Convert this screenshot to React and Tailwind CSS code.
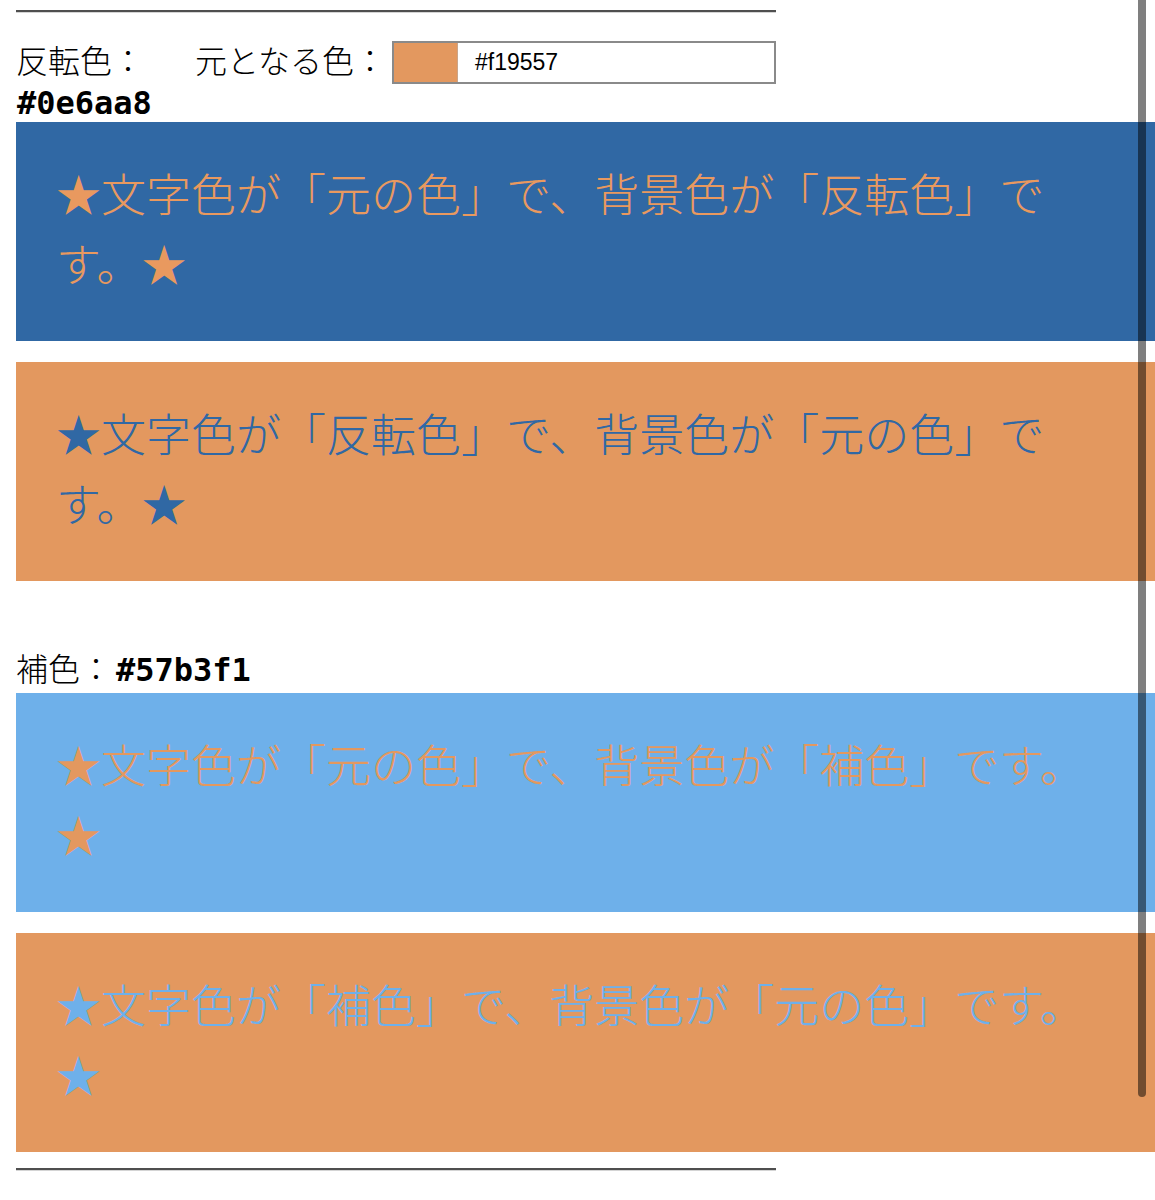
import React from 'react';

const ORIGINAL = '#e3985f';
const INVERSE = '#3068a4';
const COMPLEMENT = '#6eb0ea';

const jp = { fontFamily: '"Liberation Serif", "Noto Sans CJK JP", serif' };
const mono = { fontFamily: '"DejaVu Sans Mono", "Liberation Mono", monospace' };

const swatches = {
  inverse: [
    { text: '★文字色が「元の色」で、背景色が「反転色」です。★', bg: 'bg-[#3068a4]', fg: 'text-[#e9995f]' },
    { text: '★文字色が「反転色」で、背景色が「元の色」です。★', bg: 'bg-[#e3985f]', fg: 'text-[#3068a4]' },
  ],
  complement: [
    { text: '★文字色が「元の色」で、背景色が「補色」です。★', bg: 'bg-[#6eb0ea]', fg: 'text-[#e3985f]' },
    { text: '★文字色が「補色」で、背景色が「元の色」です。★', bg: 'bg-[#e3985f]', fg: 'text-[#6eb0ea]' },
  ],
};

const Rule = () => (
  <div className="w-[760px] border-t-2 border-t-[#4f4f4f] border-b border-b-[#d4d4d4]" />
);

const Sample = ({ item, first }) => (
  <div className={`${item.bg} ${first ? '' : 'mt-[21px]'} pl-[40px] pr-[40px] pt-[40px] pb-[39px]`}>
    <p className={`${item.fg} text-[45px] leading-[70px] font-light`} style={jp}>
      {item.text}
    </p>
  </div>
);

export default function App() {
  return (
    <div className="relative min-h-[1200px] bg-white pl-4 pt-[10px] text-black">
      <Rule />

      {/* color picker row */}
      <div className="mt-[28px] flex h-[43px] items-center text-[32px] leading-[43px] font-light" style={jp}>
        <span className="w-[179px]">反転色：</span>
        <span className="w-[197px]">元となる色：</span>
        <div className="flex h-[43px] w-[384px] border-2 border-[#8a8a8a] bg-white">
          <div className="h-full w-[64px] border-r border-r-[#c9a58a]" style={{ backgroundColor: ORIGINAL }} />
          <span
            className="pl-[17px] text-[23px] leading-[39px] font-normal"
            style={{ fontFamily: '"Liberation Sans", Arial, sans-serif' }}
          >
            #f19557
          </span>
        </div>
      </div>
      <div className="text-[32px] font-bold leading-[38px] pl-[1px]" style={mono}>
        #0e6aa8
      </div>

      {swatches.inverse.map((item, i) => (
        <Sample key={item.text} item={item} first={i === 0} />
      ))}

      <div className="mt-[70px] mb-[4px] flex items-center leading-[38px]">
        <span className="text-[32px] font-light" style={jp}>補色：</span>
        <span className="ml-[4px] text-[32px] font-bold" style={mono}>#57b3f1</span>
      </div>

      {swatches.complement.map((item, i) => (
        <Sample key={item.text} item={item} first={i === 0} />
      ))}

      <div className="mt-[16px]">
        <Rule />
      </div>

      {/* overlay scrollbar */}
      <div className="absolute right-[9px] top-0 h-[1097px] w-[8px] rounded-b-full bg-black/50" />
    </div>
  );
}
